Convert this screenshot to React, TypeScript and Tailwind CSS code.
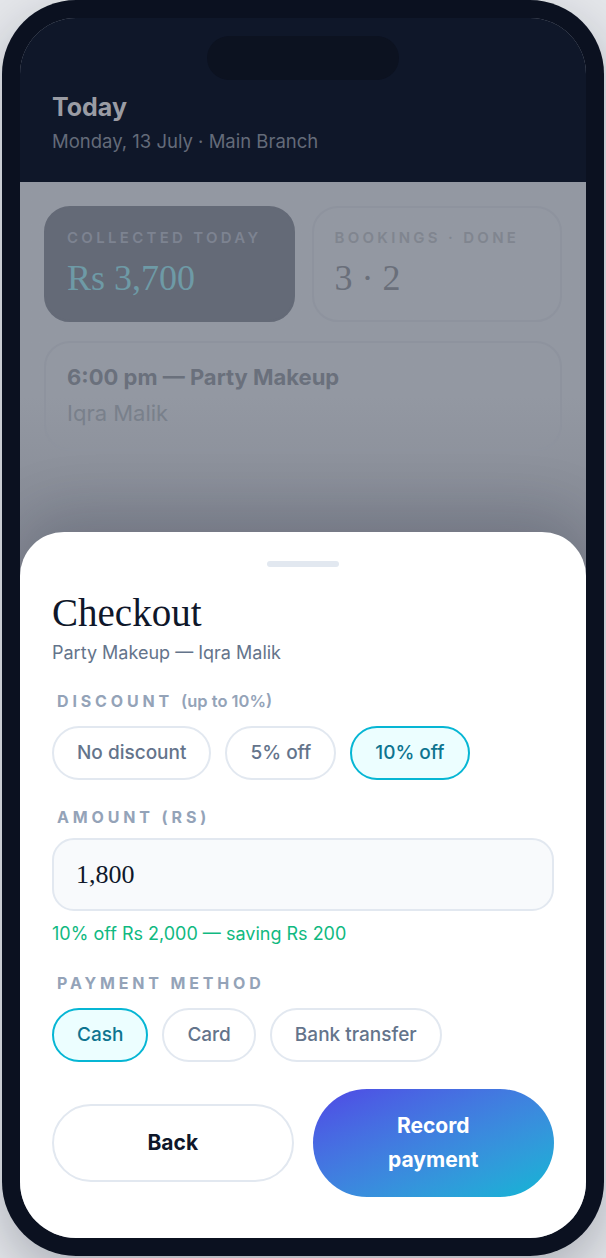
import React from 'react'

const sans = { fontFamily: 'Inter, "Noto Sans", sans-serif' }
const serif = 'font-["Liberation_Serif",serif]'

function Chip({ label, active = false }: { label: string; active?: boolean }) {
  return (
    <button
      className={
        active
          ? 'rounded-full border-2 border-[#06b6d4] bg-[#ecfeff] px-[23px] py-3 text-[19px] font-medium leading-[26px] text-[#0e7490]'
          : 'rounded-full border-2 border-[#e2e8f0] bg-white px-[23px] py-3 text-[19px] font-medium leading-[26px] text-[#64748b]'
      }
    >
      {label}
    </button>
  )
}

function SectionLabel({ children }: { children: React.ReactNode }) {
  return (
    <div className="ml-[5px] text-[16px] font-bold uppercase leading-5 tracking-[0.24em] text-[#94a3b8]">
      {children}
    </div>
  )
}

export default function App() {
  return (
    <div className="flex min-h-screen justify-center bg-[#e4e6ea]" style={sans}>
      <div className="h-[1256px] w-[602px] rounded-[74px] bg-[#0b1120] p-[18px] shadow-[0_20px_50px_rgba(15,23,42,0.25)]">
        <div className="relative h-full overflow-hidden rounded-[56px] bg-[#9398a2]">
          {/* header */}
          <div className="h-[164px] bg-[#0f1729] px-8 pt-[18px]">
            <div className="mx-auto h-[44px] w-[192px] rounded-full bg-[#0c1220]" />
            <h1 className="mt-[11px] text-[25px] font-bold leading-8 text-[#9a9ca4]">Today</h1>
            <p className="mt-[5px] text-[18.5px] leading-[26px] text-[#646b79]">Monday, 13 July · Main Branch</p>
          </div>

          {/* dimmed page */}
          <div className="bg-linear-to-b from-[#9398a2] from-50% to-[#80848f] px-6 pb-40 pt-6">
            <div className="grid grid-cols-2 gap-[17px]">
              <div className="h-[116px] rounded-[26px] border-2 border-[#646a77] bg-[#646a77] px-[21px] pt-[20px]">
                <div className="text-[15px] font-semibold uppercase leading-5 tracking-[0.22em] text-[#7d8391]">
                  Collected today
                </div>
                <div className={`mt-[10px] text-[36px] leading-10 text-[#6e9aa6] ${serif}`}>Rs 3,700</div>
              </div>
              <div className="h-[116px] rounded-[26px] border-2 border-[#8e939e] px-[21px] pt-[20px]">
                <div className="text-[15px] font-semibold uppercase leading-5 tracking-[0.22em] text-[#80858f]">
                  Bookings · Done
                </div>
                <div className={`mt-[10px] text-[36px] leading-10 text-[#6a6f7a] ${serif}`}>3 · 2</div>
              </div>
            </div>
            <div className="mt-[19px] h-[110px] rounded-[26px] border-2 border-[#8e939e] px-[21px] pt-[20px]">
              <div className="text-[22px] font-bold leading-7 text-[#6a707c]">6:00 pm — Party Makeup</div>
              <div className="mt-2 text-[22px] leading-7 text-[#79808b]">Iqra Malik</div>
            </div>
          </div>

          {/* checkout sheet */}
          <div className="absolute inset-x-0 bottom-0 rounded-t-[44px] bg-white px-8 pb-[41px] pt-[29px] shadow-[0_-20px_60px_rgba(15,23,42,0.18)]">
            <div className="mx-auto h-[6px] w-[72px] rounded-full bg-[#e2e8f0]" />
            <h2 className={`mt-[24px] text-[39px] leading-[44px] text-[#0f172a] ${serif}`}>Checkout</h2>
            <p className="mt-[6px] text-[18px] leading-6 text-[#64748b]">Party Makeup — Iqra Malik</p>

            <div className="mt-[26px]">
              <SectionLabel>
                Discount
                <span className="ml-[8px] text-[16.5px] font-semibold normal-case tracking-normal">(up to 10%)</span>
              </SectionLabel>
            </div>
            <div className="mt-[15px] flex gap-[14px]">
              <Chip label="No discount" />
              <Chip label="5% off" />
              <Chip label="10% off" active />
            </div>

            <div className="mt-[27px]">
              <SectionLabel>Amount (Rs)</SectionLabel>
            </div>
            <div className="mt-[11px] flex h-[73px] items-center rounded-[22px] border-2 border-[#e2e8f0] bg-[#f8fafc] px-[22px]">
              <span className={`text-[26px] text-[#0f172a] ${serif}`}>1,800</span>
            </div>
            <p className="mt-[11px] text-[18px] leading-6 text-[#10b981]">10% off Rs 2,000 — saving Rs 200</p>

            <div className="mt-[27px]">
              <SectionLabel>Payment method</SectionLabel>
            </div>
            <div className="mt-[15px] flex gap-[14px]">
              <Chip label="Cash" active />
              <Chip label="Card" />
              <Chip label="Bank transfer" />
            </div>

            <div className="mt-[27px] grid grid-cols-2 items-center gap-[19px]">
              <button className="rounded-full border-2 border-[#e2e8f0] bg-white px-12 py-5 text-[21px] font-bold leading-[34px] text-[#0f172a]">
                Back
              </button>
              <button className="rounded-full bg-linear-to-br from-[#4f46e5] to-[#06b6d4] px-14 py-5 text-[21px] font-bold leading-[34px] text-white">
                Record payment
              </button>
            </div>
          </div>
        </div>
      </div>
    </div>
  )
}
